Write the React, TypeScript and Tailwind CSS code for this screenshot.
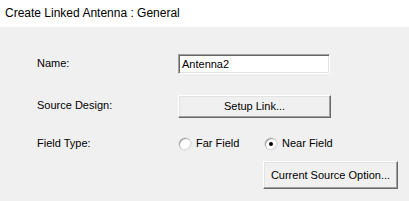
import React from "react"

const sunken =
  "border border-t-[#a0a0a0] border-l-[#a0a0a0] border-b-white border-r-white shadow-[inset_1px_1px_0_#696969,inset_-1px_-1px_0_#e3e3e3]"
const raised =
  "border border-t-white border-l-white border-b-[#696969] border-r-[#696969] shadow-[inset_-1px_-1px_0_#a0a0a0,inset_1px_1px_0_#e3e3e3] bg-[#f0f0f0]"

function Radio({ label, checked }: { label: string; checked?: boolean }) {
  return (
    <div className="flex w-[86px] items-center gap-[5px]">
      <div className="relative h-[12px] w-[12px] rounded-full bg-white shadow-[inset_1px_1px_0_#a0a0a0,inset_-1px_-1px_0_#e3e3e3,0_0_0_0.5px_#c8c8c8]">
        {checked && (
          <div className="absolute left-[4px] top-[4px] h-[4px] w-[4px] rounded-full bg-black" />
        )}
      </div>
      <span>{label}</span>
    </div>
  )
}

export default function App() {
  return (
    <div className="h-[201px] w-[409px] bg-[#f0f0f0] text-[11px] text-black [font-family:'Liberation_Sans',Arial,sans-serif]">
      {/* title bar */}
      <div className="flex h-[27px] items-center bg-white pl-[5px] pb-[2px] text-[12px]">
        Create Linked Antenna : General
      </div>

      <div className="flex flex-col pl-[37px]">
        {/* Name */}
        <div className="mt-[27px] flex h-[20px] items-start">
          <div className="w-[141px] pt-[1px]">Name:</div>
          <div className={`flex h-[20px] w-[152px] items-center bg-white pl-[3px] ${sunken}`}>
            Antenna2
          </div>
        </div>

        {/* Source design */}
        <div className="mt-[21px] flex h-[23px] items-start">
          <div className="w-[141px] pt-[2px]">Source Design:</div>
          <button type="button" className={`h-[23px] w-[153px] ${raised}`}>
            Setup Link...
          </button>
        </div>

        {/* Field type */}
        <div className="mt-[19px] flex h-[13px] items-center">
          <div className="w-[142px]">Field Type:</div>
          <div className="flex">
            <Radio label="Far Field" />
            <Radio label="Near Field" checked />
          </div>
        </div>

        <div className="mt-[11px] flex pl-[226px]">
          <button type="button" className={`h-[28px] w-[135px] ${raised}`}>
            Current Source Option...
          </button>
        </div>
      </div>
    </div>
  )
}
